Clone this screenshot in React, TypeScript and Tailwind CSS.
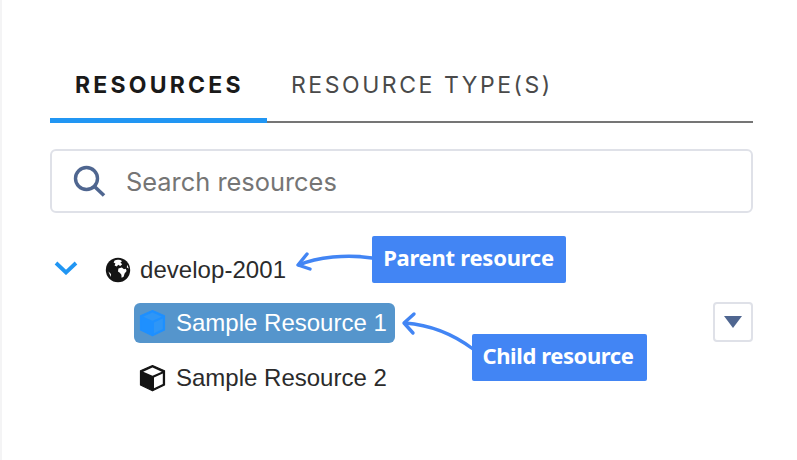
const CubeIcon = ({ fill, line }: { fill: string; line: string }) => (
	<svg width="27" height="28" viewBox="0 0 27 28" className="shrink-0">
		<path
			d="M13.5 1.5 25.5 6.8V21L13.5 26.8 1.5 21V6.8Z"
			fill={fill}
			stroke={fill}
			strokeWidth="1.2"
			strokeLinejoin="round"
		/>
		<path d="M13.5 3.6 22.8 7.8 13.5 11.8 4.2 7.8Z" fill={line} />
		<path d="M15 13.4 23.8 9.6V20L15 24.2Z" fill={line} />
	</svg>
);

const GlobeIcon = () => (
	<svg width="26" height="26" viewBox="0 0 26 26" className="shrink-0">
		<circle cx="13" cy="13" r="12.2" fill="#141414" />
		<path
			d="M9.6 3.4C12 2.4 15.6 2.8 17 4.2L15.4 5.6 17.2 7.2 15.2 9 13.2 7.8 11.8 9.4 9.6 8.6 10.4 6.4 8.6 5.4ZM13.4 11.4 16.8 10.4 19 12.2 20.8 11.8 21.6 14 19.6 16.4 18.6 19.8 16.6 20.8 16.4 17.8 14.8 15.8 13 14.4ZM22.2 7.8 23.8 11.6 21.8 10.6ZM3.4 14.4 6 17 5.8 20Z"
			fill="#fff"
		/>
	</svg>
);

const App = () => {
	return (
		<div className="relative w-[797px] h-[460px] bg-white overflow-hidden border-l-2 border-[#f4f4f5] font-['Inter',sans-serif]">
			<div className="w-[703px] ml-[48px] pt-[70px]">
				<div className="flex h-[53px] border-b-2 border-[#757575]">
					<div className="w-[217px] h-[53px] pl-[25px] pt-px border-b-[5px] border-[#2196f3] text-[23px] leading-[28px] font-bold tracking-[3.2px] text-[#1a1a1a]">
						RESOURCES
					</div>
					<div className="pl-[24px] pt-px text-[23px] leading-[28px] tracking-[2.55px] text-[#4a4a4a]">
						RESOURCE TYPE(S)
					</div>
				</div>

				<div className="flex items-center h-[64px] mt-[26px] pl-[20px] border-2 border-[#dfe1e8] rounded-[6px]">
					<svg width="34" height="34" viewBox="0 0 34 34" fill="none" stroke="#4f6690" className="shrink-0">
						<circle cx="14.5" cy="14.5" r="11" strokeWidth="3.4" />
						<path d="M22.5 22.5 32 31.5" strokeWidth="3.6" />
					</svg>
					<span className="ml-[20px] mt-[3px] text-[25.4px] text-[#757575]">Search resources</span>
				</div>

				<div className="flex items-center h-[26px] mt-[44px] font-['Liberation_Sans',sans-serif] text-[24px] text-[#2b2b2b]">
					<svg width="24" height="14" viewBox="0 0 24 14" fill="none" stroke="#2196f3" strokeWidth="3.8" className="ml-[4px] -mt-[4px] shrink-0">
						<path d="M2 2 12 11.5 22 2" />
					</svg>
					<span className="ml-[27px] flex items-center gap-[9px]">
						<GlobeIcon />
						<span className="tracking-[0.05px]">develop-2001</span>
					</span>
				</div>

				<div className="flex items-center justify-between mt-[20px] h-[40px] font-['Liberation_Sans',sans-serif] text-[24px]">
					<div className="flex items-center gap-[10px] w-[261px] h-[40px] ml-[84px] pl-[5px] rounded-[6px] bg-[#5595cc] text-white">
						<CubeIcon fill="#1e90ff" line="#2f96f6" />
						Sample Resource 1
					</div>
					<div className="flex items-center justify-center w-[40px] h-[40px] border-2 border-[#dfe1e8] rounded-[4px] -mt-[2px]">
						<svg width="18" height="12" viewBox="0 0 18 12">
							<path d="M0 0H18L9 12Z" fill="#4f6690" />
						</svg>
					</div>
				</div>

				<div className="flex items-center gap-[10px] h-[40px] mt-[15px] ml-[89px] font-['Liberation_Sans',sans-serif] text-[24px] text-[#2b2b2b]">
					<CubeIcon fill="#141414" line="#ffffff" />
					Sample Resource 2
				</div>
			</div>

			{/* annotation overlays */}
			<svg width="100" height="60" viewBox="0 0 100 60" fill="none" stroke="#4285f4" strokeWidth="3.4" strokeLinecap="round" strokeLinejoin="round" className="absolute left-[285px] top-[235px]">
				<path d="M12 30C30 22 60 19 85 23" />
				<path d="M20 19 11 30 23 34" />
			</svg>
			<div className="absolute left-[370px] top-[236px] flex items-center justify-center w-[194px] h-[47px] pb-[5px] pr-[1px] rounded-[2px] bg-[#4285f4] font-['Noto_Sans',sans-serif] text-[22px] font-bold tracking-[-0.25px] text-white">
				Parent resource
			</div>

			<svg width="90" height="50" viewBox="0 0 90 50" fill="none" stroke="#4285f4" strokeWidth="3.4" strokeLinecap="round" strokeLinejoin="round" className="absolute left-[395px] top-[310px]">
				<path d="M8 13C34 15 56 24 76 39" />
				<path d="M17 4 7 13 16 23" />
			</svg>
			<div className="absolute left-[470px] top-[334px] flex items-center justify-center w-[175px] h-[47px] pb-[5px] pr-[3px] rounded-[2px] bg-[#4285f4] font-['Noto_Sans',sans-serif] text-[22px] font-bold tracking-[-0.4px] text-white">
				Child resource
			</div>
		</div>
	);
};

export default App;
